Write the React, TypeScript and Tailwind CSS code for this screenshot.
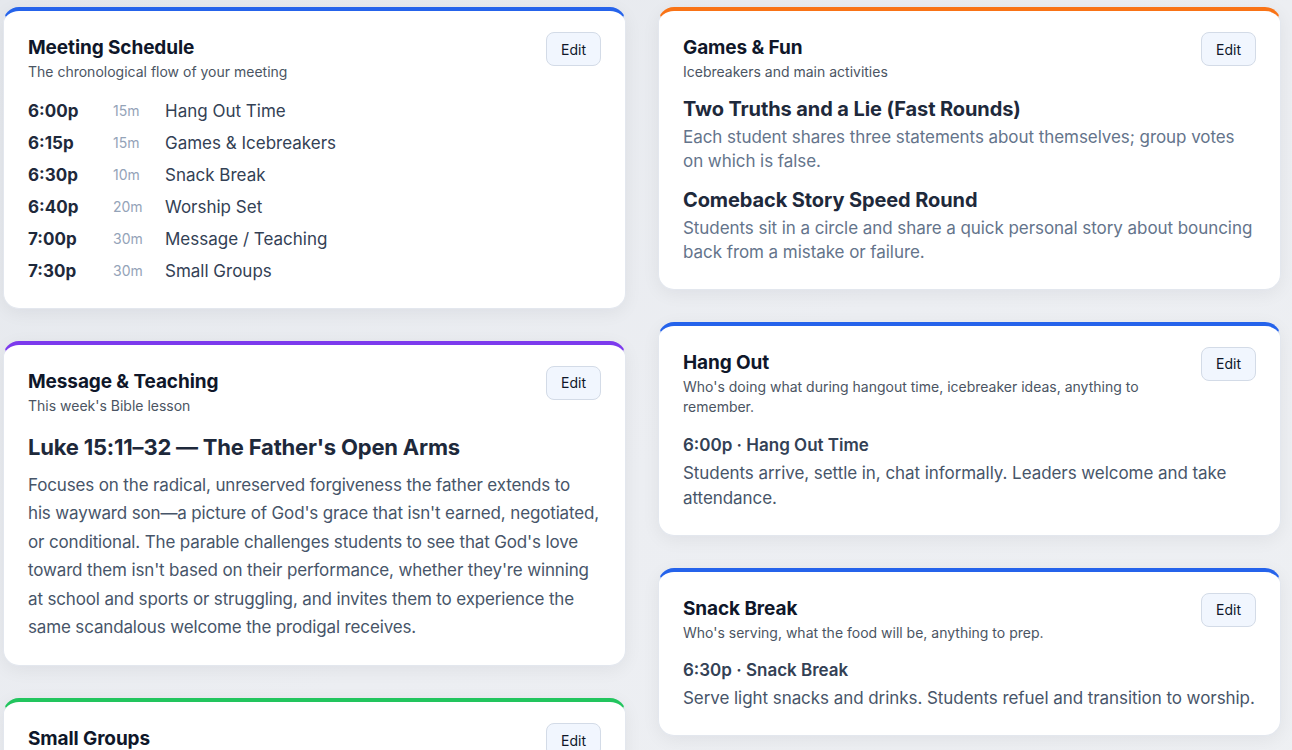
import { ReactNode } from "react";

type Slot = { time: string; mins: string; label: string };

const schedule: Slot[] = [
	{ time: "6:00p", mins: "15m", label: "Hang Out Time" },
	{ time: "6:15p", mins: "15m", label: "Games & Icebreakers" },
	{ time: "6:30p", mins: "10m", label: "Snack Break" },
	{ time: "6:40p", mins: "20m", label: "Worship Set" },
	{ time: "7:00p", mins: "30m", label: "Message / Teaching" },
	{ time: "7:30p", mins: "30m", label: "Small Groups" },
];

// lesson summary, broken the way the card lays it out
const lesson = [
	"Focuses on the radical, unreserved forgiveness the father extends to",
	"his wayward son—a picture of God's grace that isn't earned, negotiated,",
	"or conditional. The parable challenges students to see that God's love",
	"toward them isn't based on their performance, whether they're winning",
	"at school and sports or struggling, and invites them to experience the",
	"same scandalous welcome the prodigal receives.",
];

const games = [
	{
		title: "Two Truths and a Lie (Fast Rounds)",
		body: "Each student shares three statements about themselves; group votes on which is false.",
	},
	{
		title: "Comeback Story Speed Round",
		body: "Students sit in a circle and share a quick personal story about bouncing back from a mistake or failure.",
	},
];

const Card = ({
	accent,
	title,
	subtitle,
	children,
}: {
	accent: string;
	title: string;
	subtitle: string;
	children?: ReactNode;
}) => (
	<section
		className={`bg-white rounded-2xl border border-[#e3e7ee] border-t-4 ${accent} shadow-[0_4px_18px_rgba(15,23,42,0.06)] px-6 pt-[21px] pb-6`}
	>
		<div className="flex items-start justify-between gap-4">
			<div className="pt-[2px]">
				<h2 className="text-[19px] leading-[28px] font-bold text-[#0f172a] tracking-[-0.1px]">{title}</h2>
				<p className="text-[14px] leading-[20.5px] text-[#4b5563]">{subtitle}</p>
			</div>
			<button className="shrink-0 h-[34px] px-[14px] rounded-lg border border-[#d3dbe7] bg-[#f1f6fe] text-[14px] text-[#0f172a]">
				Edit
			</button>
		</div>
		{children}
	</section>
);

export default function App() {
	return (
		<div
			className="min-h-screen bg-gradient-to-br from-[#e5e8ed] via-[#eceef2] to-[#eef0f3] pl-[3px] pr-[11px] pt-[7px] pb-8"
			style={{ fontFamily: "Inter, 'Noto Sans', sans-serif" }}
		>
			<div className="grid grid-cols-2 gap-8 items-start">
				<div className="flex flex-col gap-8">
					<Card accent="border-t-[#2563eb]" title="Meeting Schedule" subtitle="The chronological flow of your meeting">
						<ul className="mt-[15px] flex flex-col gap-[6px]">
							{schedule.map((s) => (
								<li key={s.time} className="flex items-center leading-[26px]">
									<span className="w-[85px] text-[17px] font-bold text-[#1e293b]">{s.time}</span>
									<span className="w-[52px] text-[14px] text-[#94a3b8]">{s.mins}</span>
									<span className="text-[17px] text-[#334155]">{s.label}</span>
								</li>
							))}
						</ul>
					</Card>

					<Card accent="border-t-[#7c3aed]" title="Message & Teaching" subtitle="This week's Bible lesson">
						<h3 className="mt-[16px] text-[22px] leading-[30px] font-bold text-[#1e293b] tracking-[-0.2px]">
							Luke 15:11–32 — The Father's Open Arms
						</h3>
						<p className="mt-[9px] text-[17px] leading-[28.4px] tracking-[-0.15px] text-[#475569]">
							{lesson.map((line) => (
								<span key={line} className="block whitespace-nowrap">
									{line}
								</span>
							))}
						</p>
					</Card>

					<Card accent="border-t-[#22c55e]" title="Small Groups" subtitle="Discussion questions and leader assignments">
						<div className="h-24" />
					</Card>
				</div>

				<div className="flex flex-col gap-8">
					<Card accent="border-t-[#f97316]" title="Games & Fun" subtitle="Icebreakers and main activities">
						<div className="mt-[12px] flex flex-col gap-[12px]">
							{games.map((g) => (
								<div key={g.title}>
									<h3 className="text-[20px] leading-[28px] font-bold text-[#1e293b] tracking-[-0.1px]">{g.title}</h3>
									<p className="mt-[2px] text-[17px] leading-[24.5px] tracking-[-0.06px] text-[#64748b]">{g.body}</p>
								</div>
							))}
						</div>
					</Card>

					<Card
						accent="border-t-[#2563eb]"
						title="Hang Out"
						subtitle="Who's doing what during hangout time, icebreaker ideas, anything to remember."
					>
						<h4 className="mt-[15px] text-[17px] leading-[24px] font-semibold text-[#334155]">
							6:00p · Hang Out Time
						</h4>
						<p className="mt-[4px] text-[17px] leading-[25px] tracking-[-0.06px] text-[#475569]">
							Students arrive, settle in, chat informally. Leaders welcome and take attendance.
						</p>
					</Card>

					<Card
						accent="border-t-[#2563eb]"
						title="Snack Break"
						subtitle="Who's serving, what the food will be, anything to prep."
					>
						<h4 className="mt-[15px] text-[17px] leading-[24px] font-semibold text-[#334155]">
							6:30p · Snack Break
						</h4>
						<p className="mt-[4px] text-[17px] leading-[25px] tracking-[-0.06px] text-[#475569]">
							Serve light snacks and drinks. Students refuel and transition to worship.
						</p>
					</Card>
				</div>
			</div>
		</div>
	);
}
